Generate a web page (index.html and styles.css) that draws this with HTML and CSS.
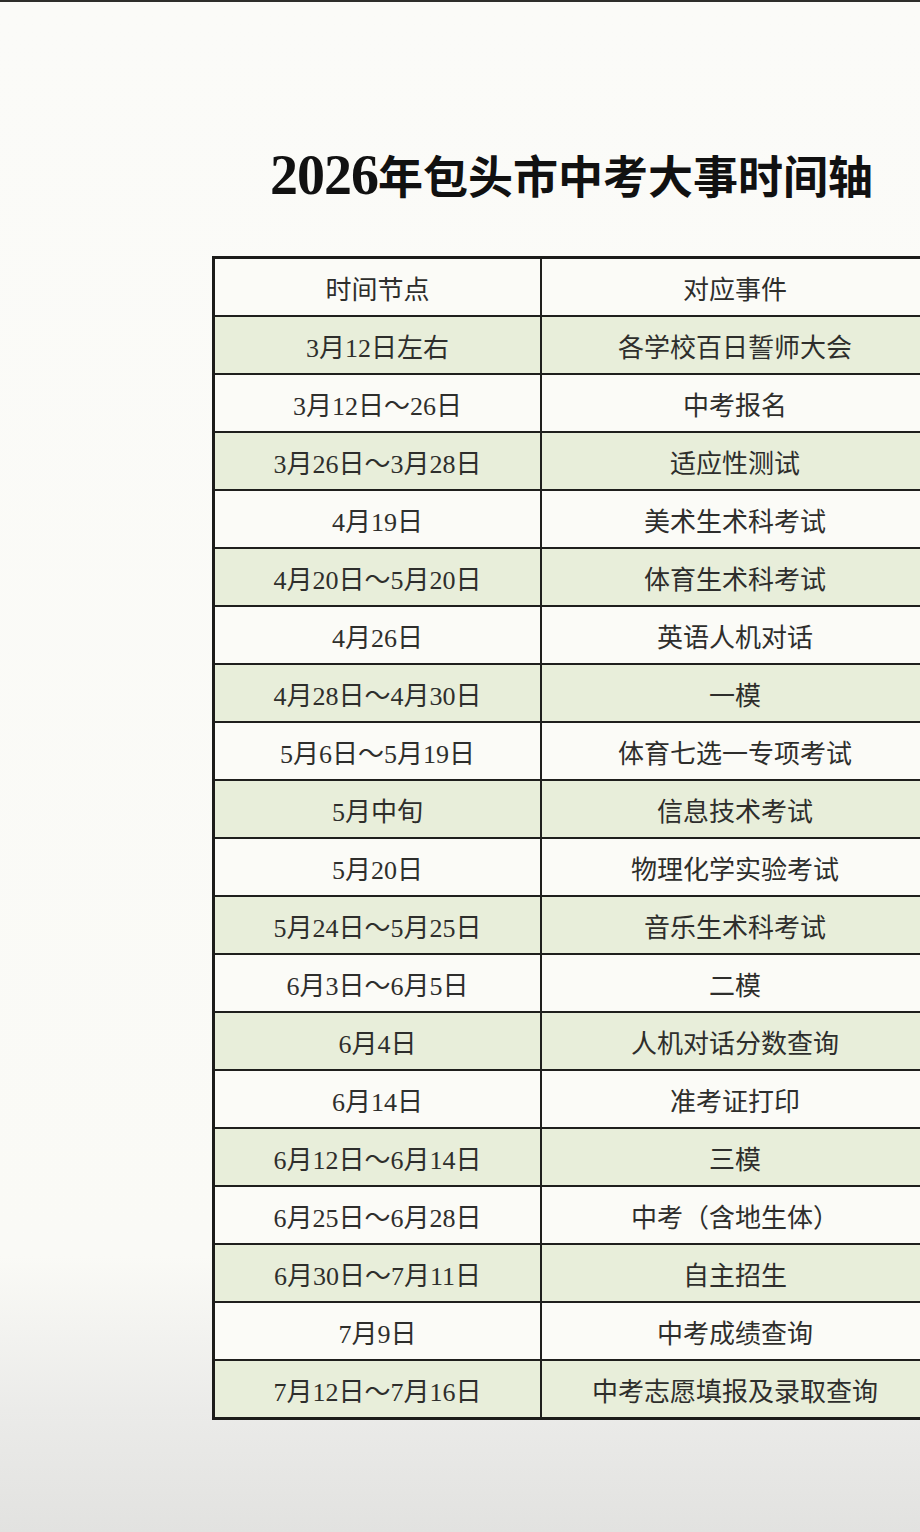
FILE: index.html
```html
<!DOCTYPE html>
<html lang="zh-CN">
<head>
<meta charset="utf-8">
<title>2026年包头市中考大事时间轴</title>
<link rel="stylesheet" href="styles.css">
</head>
<body>
<div class="topline"></div>
<main class="sheet">
  <h1 class="title"><span class="year">2026</span>年包头市中考大事时间轴</h1>
  <table class="timeline">
    <thead>
      <tr><th>时间节点</th><th>对应事件</th></tr>
    </thead>
    <tbody>
      <tr class="g"><td>3月12日左右</td><td>各学校百日誓师大会</td></tr>
      <tr><td>3月12日～26日</td><td>中考报名</td></tr>
      <tr class="g"><td>3月26日～3月28日</td><td>适应性测试</td></tr>
      <tr><td>4月19日</td><td>美术生术科考试</td></tr>
      <tr class="g"><td>4月20日～5月20日</td><td>体育生术科考试</td></tr>
      <tr><td>4月26日</td><td>英语人机对话</td></tr>
      <tr class="g"><td>4月28日～4月30日</td><td>一模</td></tr>
      <tr><td>5月6日～5月19日</td><td>体育七选一专项考试</td></tr>
      <tr class="g"><td>5月中旬</td><td>信息技术考试</td></tr>
      <tr><td>5月20日</td><td>物理化学实验考试</td></tr>
      <tr class="g"><td>5月24日～5月25日</td><td>音乐生术科考试</td></tr>
      <tr><td>6月3日～6月5日</td><td>二模</td></tr>
      <tr class="g"><td>6月4日</td><td>人机对话分数查询</td></tr>
      <tr><td>6月14日</td><td>准考证打印</td></tr>
      <tr class="g"><td>6月12日～6月14日</td><td>三模</td></tr>
      <tr><td>6月25日～6月28日</td><td>中考（含地生体）</td></tr>
      <tr class="g"><td>6月30日～7月11日</td><td>自主招生</td></tr>
      <tr><td>7月9日</td><td>中考成绩查询</td></tr>
      <tr class="g"><td>7月12日～7月16日</td><td>中考志愿填报及录取查询</td></tr>
    </tbody>
  </table>
</main>
</body>
</html>
```

FILE: styles.css
```css
html, body {
  margin: 0;
  padding: 0;
}
body {
  width: 920px;
  height: 1532px;
  overflow: hidden;
  background: linear-gradient(to bottom, #fbfbf8 0%, #fafaf6 82%, #ebebe9 92%, #e2e2e0 100%);
  font-family: "Liberation Serif", "Noto Sans CJK SC", serif;
  color: #2b2b2b;
}
.topline {
  height: 2px;
  background: #2e2e2b;
}
.sheet {
  margin-left: 212px;
  width: 719px;
  padding-top: 140px;
}
.title {
  margin: 0;
  height: 114px;
  text-align: center;
  font-size: 45px;
  line-height: 66px;
  font-weight: 700;
  color: #111;
}
.title .year {
  font-size: 56px;
  letter-spacing: -1px;
}
.timeline {
  width: 719px;
  border-collapse: collapse;
  table-layout: fixed;
  border: 3px solid #1c1c1a;
}
.timeline th,
.timeline td {
  border: 2px solid #1f1f1d;
  height: 56px;
  padding: 0;
  text-align: center;
  vertical-align: middle;
  font-size: 26px;
  font-weight: 400;
  color: #2e2e2c;
  background: #fbfbf7;
}
.timeline th:first-child,
.timeline td:first-child {
  width: 325px;
}
.timeline tr.g td {
  background: #e8eeda;
}
```
